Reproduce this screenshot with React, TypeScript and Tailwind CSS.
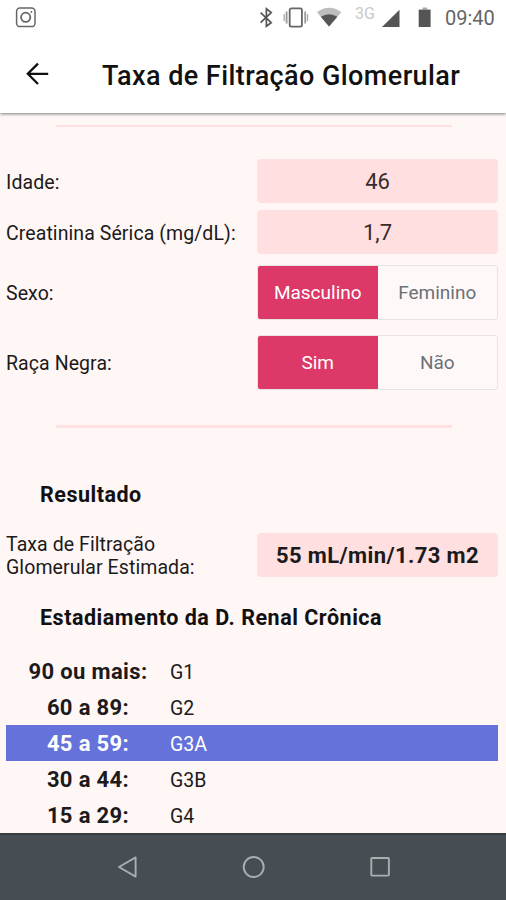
import { useState } from "react";

interface Stage {
  range: string;
  name: string;
}

const stages: Stage[] = [
  { range: "90 ou mais:", name: "G1" },
  { range: "60 a 89:", name: "G2" },
  { range: "45 a 59:", name: "G3A" },
  { range: "30 a 44:", name: "G3B" },
  { range: "15 a 29:", name: "G4" },
];

export default function App() {
  const [sex, setSex] = useState("Masculino");
  const [black, setBlack] = useState("Sim");

  return (
    <div className="w-[506px] h-[900px] flex flex-col overflow-hidden bg-[#fff6f6] font-['Roboto',sans-serif] text-[#1c1a1a]">
      <StatusBar />

      {/* HEADER */}
      <header className="relative z-10 h-[77px] shrink-0 flex items-center bg-white shadow-[0_1px_3px_rgba(0,0,0,0.5)]">
        <button type="button" aria-label="Voltar" className="ml-[25px] -mt-0.5 w-6">
          <svg width="24" height="24" viewBox="0 0 24 24" fill="none" stroke="#111" strokeWidth="2.3">
            <path d="M23.2 11.8H3M13 1.6L2.8 11.8L13 22" />
          </svg>
        </button>
        <h1 className="ml-[53px] pt-0.5 text-[27px] leading-8 tracking-[0.42px] font-medium whitespace-nowrap text-[#111]">
          Taxa de Filtração Glomerular
        </h1>
      </header>

      <main className="flex-1 min-h-0 overflow-hidden pl-1.5 pr-2">
        <hr className="mt-3 ml-[50px] w-[396px] border-0 h-0.5 bg-[#ffdfe1]" />

        {/* FORM */}
        <div className="mt-8 flex flex-col">
          <Row label="Idade:" className="h-[44px]">
            <ValueBox>46</ValueBox>
          </Row>
          <Row label="Creatinina Sérica (mg/dL):" className="mt-[7px] h-[44px]">
            <ValueBox>1,7</ValueBox>
          </Row>
          <Row label="Sexo:" className="mt-[11px] h-[55px]">
            <Toggle options={["Masculino", "Feminino"]} value={sex} onChange={setSex} />
          </Row>
          <Row label="Raça Negra:" className="mt-[15px] h-[55px]">
            <Toggle options={["Sim", "Não"]} value={black} onChange={setBlack} />
          </Row>
        </div>

        <hr className="mt-[35px] ml-[50px] w-[396px] border-0 h-[3px] bg-[#ffe0e1]" />

        {/* RESULT */}
        <h2 className="mt-[53px] ml-[34px] text-[21.5px] leading-7 tracking-[0.5px] font-bold text-[#111]">
          Resultado
        </h2>
        <Row label="Taxa de Filtração Glomerular Estimada:" className="mt-6 h-[44px]">
          <ValueBox bold>55 mL/min/1.73 m2</ValueBox>
        </Row>
        <h2 className="mt-[27px] ml-[34px] text-[21.5px] leading-7 tracking-[0.52px] font-bold text-[#111]">
          Estadiamento da D. Renal Crônica
        </h2>

        {/* STAGES */}
        <ul className="mt-[21px]">
          {stages.map((s) => (
            <li
              key={s.name}
              className={`h-9 flex items-center ${s.name === "G3A" ? "bg-[#6572d9] text-white" : ""}`}
            >
              <span className="w-1/3 pt-0.5 text-center text-[22px] leading-7 tracking-[0.35px] font-bold">
                {s.range}
              </span>
              <span className="pt-[3px] text-[19.5px]">{s.name}</span>
            </li>
          ))}
        </ul>
      </main>

      <NavBar />
    </div>
  );
}

/* ================= FORM PARTS ================= */
function Row({ label, className, children }: any) {
  return (
    <div className={`flex items-center ${className}`}>
      <div className="w-[251px] shrink-0 pr-3 pt-0.5 text-[19.5px] leading-[23px] tracking-[0.08px]">{label}</div>
      <div className="flex-1 h-full">{children}</div>
    </div>
  );
}

function ValueBox({ bold, children }: any) {
  return (
    <div
      className={`h-full flex items-center justify-center rounded bg-[#ffdfdf] text-[22px] whitespace-nowrap ${bold ? "font-bold tracking-[0.38px]" : "text-[#3a2b2b]"}`}
    >
      {children}
    </div>
  );
}

function Toggle({ options, value, onChange }: any) {
  return (
    <div className="h-full flex rounded-[3px] border border-[#e9e3e4] bg-[#fff8f9] overflow-hidden">
      {options.map((o: string) => (
        <button
          key={o}
          type="button"
          onClick={() => onChange(o)}
          className={`flex-1 pt-0.5 text-[19px] ${o === value ? "bg-[#dc3868] text-white" : "text-[#6b7176]"}`}
        >
          {o}
        </button>
      ))}
    </div>
  );
}

/* ================= SYSTEM BARS ================= */
function StatusBar() {
  return (
    <div className="relative z-20 h-9 shrink-0 flex bg-white">
      <svg className="ml-[15px] mt-[7px]" width="21" height="21" viewBox="0 0 21 21" fill="none" stroke="#666" strokeWidth="1.5">
        <rect x="1.6" y="1" width="18.4" height="18.6" rx="3.4" />
        <circle cx="10.7" cy="10.3" r="4.6" strokeWidth="1.8" />
        <circle cx="16.4" cy="5" r="0.9" fill="#666" stroke="none" />
      </svg>
      <svg className="ml-[222px]" width="180" height="36" viewBox="258 0 180 36" fill="none">
        {/* bluetooth */}
        <path d="M260.6 12.6L271.2 22.6L266.4 26.2V8.8L271.2 12.6L260.6 22.6" stroke="#555" strokeWidth="1.7" />
        {/* vibrate */}
        <rect x="289.7" y="8.4" width="12.2" height="18.2" rx="1.6" stroke="#666" strokeWidth="1.8" />
        <path d="M286.6 11.5V23.5M305.2 11.5V23.5" stroke="#999" strokeWidth="1.8" />
        <path d="M284.2 14V21M307.5 14V21" stroke="#aaa" strokeWidth="1.3" />
        {/* wifi */}
        <path d="M317 12.2Q329 3.5 341.3 12.2L329 26.5Z" fill="#bdbdbd" />
        <path d="M320.8 16.8Q329 11.5 337.4 16.8L329 26.5Z" fill="#555" />
        {/* signal */}
        <path d="M382 27L399.5 9.8V27Z" fill="#555" />
        {/* battery */}
        <path d="M422.5 7.5H427.2V9.6H422.5Z" fill="#aaa" />
        <path d="M418.7 9.6H430.6V27H418.7Z" fill="#555" />
        <text x="355" y="19" fill="#c9c9c9" fontSize="16" fontFamily="Roboto">3G</text>
      </svg>
      <span className="ml-[7px] mt-1.5 text-[20px] leading-6 text-[#646464]">09:40</span>
    </div>
  );
}

function NavBar() {
  return (
    <nav className="h-[67px] shrink-0 bg-[#464e53] border-t-2 border-[#363e40]">
      <svg width="506" height="65" viewBox="0 835 506 65" fill="none" stroke="#a9aeb0" strokeWidth="1.9" strokeLinejoin="round">
        <path d="M119 867L135.6 857.4V876.6Z" />
        <circle cx="253.7" cy="867" r="10" />
        <rect x="371.3" y="858" width="17.6" height="17.6" rx="0.8" />
      </svg>
    </nav>
  );
}
